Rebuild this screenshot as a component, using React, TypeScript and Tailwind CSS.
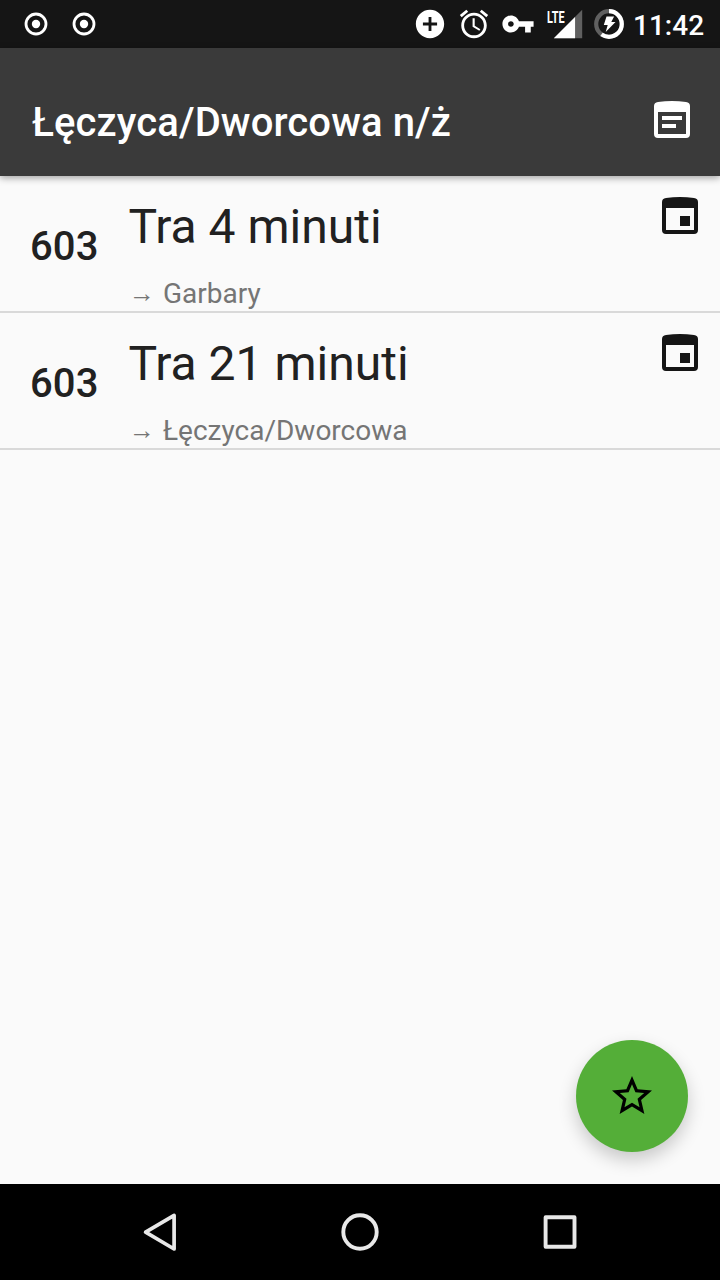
import type { ReactNode } from "react";

type Departure = { line: string; time: string; destination: string };

const departures: Departure[] = [
  { line: "603", time: "Tra 4 minuti", destination: "Garbary" },
  { line: "603", time: "Tra 21 minuti", destination: "Łęczyca/Dworcowa" },
];

function StatusIcon({ children }: { children: ReactNode }) {
  return (
    <svg viewBox="0 0 24 24" className="size-[34px] shrink-0 fill-white">
      {children}
    </svg>
  );
}

function RecordIcon() {
  return (
    <svg viewBox="0 0 24 24" className="size-6">
      <circle cx="12" cy="12" r="10" fill="none" stroke="#fff" strokeWidth="2.8" />
      <circle cx="12" cy="12" r="4.2" fill="#fff" />
    </svg>
  );
}

function StatusBar() {
  return (
    <header className="flex h-12 items-center bg-[#151515] pr-4 pl-6 text-white">
      <div className="flex gap-6">
        <RecordIcon />
        <RecordIcon />
      </div>
      <div className="ml-auto flex items-center">
        <div className="flex items-center gap-2.5">
          <StatusIcon>
            <path d="M12 2C6.48 2 2 6.48 2 12s4.48 10 10 10 10-4.48 10-10S17.52 2 12 2zm5 11h-4v4h-2v-4H7v-2h4V7h2v4h4v2z" />
          </StatusIcon>
          <StatusIcon>
            <path d="M22 5.72l-4.6-3.86-1.29 1.53 4.6 3.86L22 5.72zM7.88 3.39L6.6 1.86 2 5.71l1.29 1.53 4.59-3.85zM12.5 8H11v6l4.75 2.85.75-1.23-4-2.37V8zM12 4c-4.97 0-9 4.03-9 9s4.02 9 9 9c4.97 0 9-4.03 9-9s-4.03-9-9-9zm0 16c-3.87 0-7-3.13-7-7s3.13-7 7-7 7 3.13 7 7-3.13 7-7 7z" />
          </StatusIcon>
          <StatusIcon>
            <path d="M12.65 10C11.83 7.67 9.61 6 7 6c-3.31 0-6 2.69-6 6s2.69 6 6 6c2.61 0 4.83-1.67 5.65-4H17v4h4v-4h2v-4H12.65zM7 14c-1.1 0-2-.9-2-2s.9-2 2-2 2 .9 2 2-.9 2-2 2z" />
          </StatusIcon>
        </div>
        <div className="relative ml-4">
          <StatusIcon>
            <path d="M2 22h20V2z" fill="#606060" />
            <path d="M2 22h15V7z" />
          </StatusIcon>
          <span className="absolute top-[2px] -left-[4px] origin-left scale-x-[0.64] text-[17px] leading-[17px] font-bold">
            LTE
          </span>
        </div>
        <svg viewBox="0 0 30 30" className="ml-[9px] size-[30px]">
          <circle cx="15" cy="15" r="12.8" fill="none" stroke="#606060" strokeWidth="4.2" />
          <circle
            cx="15"
            cy="15"
            r="12.8"
            fill="none"
            stroke="#fff"
            strokeWidth="4.2"
            pathLength="100"
            strokeDasharray="60 40"
            transform="rotate(-90 15 15)"
          />
          <path d="M12.5 7.5h7.6l-2.8 5.4h4.2L11.7 23l2-7H9.8z" fill="#fff" />
        </svg>
        <span className="ml-[9px] w-[71px] pt-1 text-[28px] leading-8 font-medium whitespace-nowrap">
          11:42
        </span>
      </div>
    </header>
  );
}

function AppBar() {
  return (
    <div className="z-10 flex h-32 items-center justify-between bg-[#3a3a3a] pt-4 pr-[30px] pl-8 text-white shadow-[0_2px_7px_rgba(0,0,0,0.36)]">
      <h1 className="pt-1.5 text-[40px] leading-[48px] font-medium tracking-[0.11px]">
        Łęczyca/Dworcowa n/ż
      </h1>
      <svg viewBox="0 0 36 37" className="mb-px h-[37px] w-9 fill-white">
        <path
          fillRule="evenodd"
          d="M0 5Q0 1.6 4 1Q18-.8 32 1Q36 1.6 36 5V33Q36 37 32 37H4Q0 37 0 33ZM4 11V33H32V11Z"
        />
        <path d="M8 15h20v4H8zM8 23h14v4H8z" />
      </svg>
    </div>
  );
}

function DepartureRow({ line, time, destination }: Departure) {
  return (
    <li className="flex h-[137px] border-b-2 border-[#d9d9d9] pr-[22px] pl-[30px]">
      <div className="w-[98px] pt-[47px] text-[40px] leading-[48px] font-medium tracking-[0.14px] text-[#212121]">
        {line}
      </div>
      <div className="flex-1">
        <div className="pt-[23px] pl-[0.4px] text-[48px] leading-[56px] text-[#212121]">{time}</div>
        <div className="mt-[23px] flex text-[28px] leading-8 text-[#757575]">
          <span className="w-[35px] pl-px font-['Liberation_Serif',serif] text-[26px]">→</span>
          <span>{destination}</span>
        </div>
      </div>
      <svg viewBox="0 0 36 37" className="mt-[21px] h-[37px] w-9 fill-[#151515]">
        <path
          fillRule="evenodd"
          d="M0 5Q0 1.6 4 1Q18-.8 32 1Q36 1.6 36 5V33Q36 37 32 37H4Q0 37 0 33ZM4 11V33H32V11Z"
        />
        <path d="M18 19h10v10H18z" />
      </svg>
    </li>
  );
}

function NavigationBar() {
  return (
    <nav className="flex h-24 items-center justify-center gap-[152px] bg-black">
      <svg viewBox="0 0 48 48" className="size-12 fill-none stroke-[#e8e8e8] stroke-[3.7]">
        <path d="M9.6 24.2L38.1 7.4V41Z" strokeLinejoin="round" />
      </svg>
      <svg viewBox="0 0 48 48" className="size-12 fill-none stroke-[#e8e8e8] stroke-[3.9]">
        <circle cx="24" cy="24" r="16.7" />
      </svg>
      <svg viewBox="0 0 48 48" className="size-12 fill-none stroke-[#e8e8e8] stroke-[3.9]">
        <rect x="9.6" y="9.3" width="28.9" height="29.4" strokeLinejoin="round" />
      </svg>
    </nav>
  );
}

export default function App() {
  return (
    <div className="flex h-[1280px] w-[720px] flex-col overflow-hidden bg-[#fafafa] font-[Roboto,sans-serif]">
      <StatusBar />
      <AppBar />
      <main className="relative flex-1">
        <ul>
          {departures.map((departure) => (
            <DepartureRow key={departure.destination} {...departure} />
          ))}
        </ul>
        <button
          aria-label="Preferiti"
          className="absolute right-8 bottom-8 flex size-28 items-center justify-center rounded-full bg-[#54ae38] shadow-[0_8px_18px_rgba(0,0,0,0.2)]"
        >
          <svg viewBox="0 0 24 24" className="size-12 fill-black">
            <path d="M22 9.24l-7.19-.62L12 2 9.19 8.63 2 9.24l5.46 4.73L5.82 21 12 17.27 18.18 21l-1.63-7.03L22 9.24zM12 15.4l-3.76 2.27 1-4.28-3.32-2.88 4.38-.38L12 6.1l1.71 4.04 4.38.38-3.32 2.88 1 4.28L12 15.4z" />
          </svg>
        </button>
      </main>
      <NavigationBar />
    </div>
  );
}
